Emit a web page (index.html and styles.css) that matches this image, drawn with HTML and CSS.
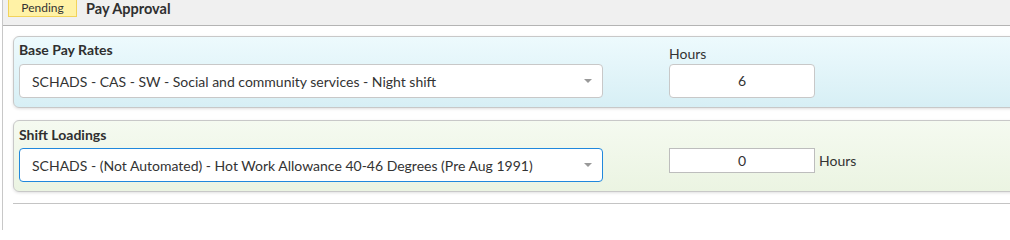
FILE: index.html
```html
<!DOCTYPE html>
<html>
<head>
<meta charset="utf-8">
<link rel="stylesheet" href="styles.css">
</head>
<body>
<div class="page">
  <div class="header">
    <span class="badge">Pending</span>
    <span class="title">Pay Approval</span>
  </div>
  <div class="content">
    <div class="panel panel-base">
      <div class="panel-title">Base Pay Rates</div>
      <div class="field-label">Hours</div>
      <div class="select">
        <span>SCHADS - CAS - SW - Social and community services - Night shift</span>
        <span class="caret"></span>
      </div>
      <div class="hours-cell">
        <div class="input input-round">6</div>
      </div>
    </div>
    <div class="panel panel-shift">
      <div class="panel-title">Shift Loadings</div>
      <div class="field-label"></div>
      <div class="select select-focus">
        <span>SCHADS - (Not Automated) - Hot Work Allowance 40-46 Degrees (Pre Aug 1991)</span>
        <span class="caret"></span>
      </div>
      <div class="hours-cell">
        <div class="input input-square">0</div>
        <span class="unit">Hours</span>
      </div>
    </div>
    <div class="divider"></div>
  </div>
</div>
</body>
</html>
```

FILE: styles.css
```css
html, body {
  margin: 0;
  padding: 0;
  background: #ffffff;
  font-family: Lato, "Liberation Sans", sans-serif;
  color: #333333;
  overflow: hidden;
}
.page {
  margin-left: 2px;
  border-left: 1px solid #c8c8c8;
  height: 230px;
}
.header {
  height: 25px;
  background: #f0f0f0;
  border-bottom: 1px solid #b4b4b4;
  display: flex;
  align-items: flex-start;
}
.badge {
  box-sizing: border-box;
  margin-left: 5px;
  width: 69px;
  height: 17px;
  background: #fff2a6;
  border: 1px solid #f2d35a;
  border-top: none;
  font-size: 12px;
  line-height: 16px;
  text-align: center;
  color: #333;
}
.title {
  margin-left: 9px;
  font-size: 14.5px;
  font-weight: 700;
  line-height: 17px;
  color: #2f2f2f;
}
.content {
  padding: 10px 0 0 10px;
  margin-right: -30px;
}
.panel {
  box-sizing: border-box;
  height: 72px;
  border: 1px solid #c8c8c8;
  border-radius: 6px;
  box-shadow: 0 1px 3px rgba(0,0,0,0.12);
  padding: 4px 5px 0 5px;
  display: grid;
  grid-template-columns: 584px 146px;
  grid-template-rows: 17px 34px;
  column-gap: 66px;
  row-gap: 6px;
}
.panel-base {
  background: linear-gradient(#edfafd, #d7eff5);
}
.panel-shift {
  margin-top: 12px;
  padding-top: 5px;
  background: linear-gradient(#f5faf0, #ebf4e2);
  row-gap: 5px;
}
.panel-title {
  font-size: 14px;
  font-weight: 700;
  line-height: 17px;
  color: #2f2f2f;
}
.field-label {
  font-size: 14px;
  line-height: 17px;
  margin-top: 4px;
  color: #333;
}
.select {
  box-sizing: border-box;
  height: 34px;
  background: #ffffff;
  border: 1px solid #c8c8c8;
  border-radius: 4px;
  padding: 0 10px 0 12px;
  display: flex;
  align-items: center;
  justify-content: space-between;
  font-size: 14px;
  color: #333;
}
.select-focus {
  border-color: #2188dc;
}
.caret {
  width: 0;
  height: 0;
  border-left: 4px solid transparent;
  border-right: 4px solid transparent;
  border-top: 4px solid #999;
}
.hours-cell {
  display: flex;
  align-items: flex-start;
}
.input {
  box-sizing: border-box;
  width: 146px;
  flex: none;
  background: #fff;
  border: 1px solid #c8c8c8;
  font-size: 14px;
  text-align: center;
  color: #333;
}
.input-round {
  height: 34px;
  line-height: 32px;
  border-radius: 4px;
}
.input-square {
  height: 25px;
  line-height: 23px;
  border-color: #bdbdbd;
}
.unit {
  margin-left: 4px;
  font-size: 14px;
  line-height: 25px;
  color: #333;
}
.divider {
  margin-top: 11px;
  height: 1px;
  background: #c4c4c4;
}
```
